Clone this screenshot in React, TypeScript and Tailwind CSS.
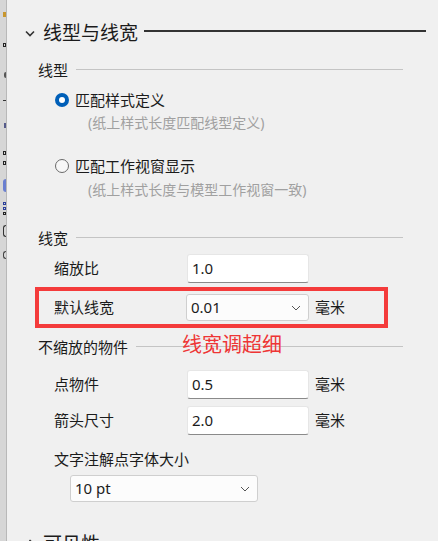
import React from 'react';

const font = "font-['Noto_Sans','Noto_Sans_CJK_SC',sans-serif]";

const Chevron: React.FC<{ className?: string }> = ({ className }) => (
  <svg width="10" height="6" viewBox="0 0 10 6" className={className}>
    <polyline points="1,1 5,5 9,1" fill="none" stroke="currentColor" strokeWidth="1" />
  </svg>
);

const SectionHeader: React.FC<{ title: string; open?: boolean; className?: string }> = ({ title, open = true, className }) => (
  <div className={`flex h-[22px] items-center pr-[12px] ${className ?? ''}`}>
    <div className="flex w-[36px] justify-end pr-[8px] text-[#333]">
      {open ? (
        <svg width="10" height="7" viewBox="0 0 10 7">
          <polyline points="1,1.5 5,5.5 9,1.5" fill="none" stroke="currentColor" strokeWidth="1.6" />
        </svg>
      ) : (
        <svg width="7" height="10" viewBox="0 0 7 10">
          <polyline points="1.5,1 5.5,5 1.5,9" fill="none" stroke="currentColor" strokeWidth="1.6" />
        </svg>
      )}
    </div>
    <span className="text-[19px] leading-none text-[#1b1b1b]">{title}</span>
    <div className="mb-[4px] ml-[6px] h-[2px] flex-1 bg-[#333]" />
  </div>
);

const SubHeader: React.FC<{ title: string; className?: string }> = ({ title, className }) => (
  <div className={`flex h-[18px] items-center pl-[31px] pr-[35px] ${className ?? ''}`}>
    <span className="text-[15px] leading-none text-[#1b1b1b]">{title}</span>
    <div className="mb-[2px] ml-[8px] h-px flex-1 bg-[#c4c4c4]" />
  </div>
);

const Radio: React.FC<{ label: string; checked?: boolean; className?: string }> = ({ label, checked, className }) => (
  <div className={`flex h-[20px] items-center pl-[48px] ${className ?? ''}`}>
    {checked ? (
      <span className="flex h-[14px] w-[14px] items-center justify-center rounded-full bg-[#005fb8]">
        <span className="h-[6px] w-[6px] rounded-full bg-white" />
      </span>
    ) : (
      <span className="h-[14px] w-[14px] rounded-full border border-[#6a6a6a] bg-[#f7f7f7]" />
    )}
    <span className="ml-[6px] text-[15px] leading-none text-[#1b1b1b]">{label}</span>
  </div>
);

const Desc: React.FC<{ text: string; className?: string }> = ({ text, className }) => (
  <div className={`flex h-[18px] items-center pl-[81px] text-[14px] leading-none text-[#a0a0a0] ${className ?? ''}`}>
    {text}
  </div>
);

const TextBox: React.FC<{ value: string }> = ({ value }) => (
  <div className="flex h-[29px] w-[122px] items-center rounded-[3px] border border-[#e6e6e6] border-b-[#8a8a8a] bg-white pl-[4px] text-[15px] text-[#1b1b1b]">
    {value}
  </div>
);

const SelectBox: React.FC<{ value: string; width: string }> = ({ value, width }) => (
  <div className={`flex h-[27px] ${width} items-center justify-between rounded-[3px] border border-[#cfcfcf] bg-[#fcfcfc] pl-[4px] pr-[7px] text-[15px] text-[#1b1b1b]`}>
    <span>{value}</span>
    <Chevron className="text-[#555]" />
  </div>
);

const FieldRow: React.FC<{ label: string; value: string; unit?: string; className?: string }> = ({ label, value, unit, className }) => (
  <div className={`flex h-[29px] items-center pl-[47px] ${className ?? ''}`}>
    <span className="w-[133px] text-[15px] leading-none text-[#1b1b1b]">{label}</span>
    <TextBox value={value} />
    {unit && <span className="ml-[6px] text-[15px] leading-none text-[#1b1b1b]">{unit}</span>}
  </div>
);

const LeftStrip: React.FC = () => (
  <div className="flex w-[7px] shrink-0 flex-col items-end border-r border-[#b8b8b8] bg-[#d6d6d6] pt-[12px]">
    <span className="h-[5px] w-[3px] shrink-0 bg-[#c8962d]" />
    <span className="mt-[26px] h-[4px] w-[3px] shrink-0 border border-[#222]" />
    <span className="mt-[25px] h-[6px] w-[2px] shrink-0 rounded-l bg-[#555]" />
    <span className="mt-[22px] h-[1px] w-[3px] shrink-0 bg-[#333]" />
    <span className="mt-[22px] h-[5px] w-[2px] shrink-0 bg-[#555a8a]" />
    <span className="mt-[23px] h-[4px] w-[3px] shrink-0 border border-[#222]" />
    <span className="mt-[6px] h-[4px] w-[3px] shrink-0 border border-[#222]" />
    <span className="mt-[14px] h-[13px] w-[3px] shrink-0 rounded-l bg-[#6a7fd0]" />
    <span className="mt-[10px] h-[3px] w-[3px] shrink-0 border border-[#2a3f9a]" />
    <span className="mt-[2px] h-[3px] w-[3px] shrink-0 border border-[#2a3f9a]" />
    <span className="mt-[2px] h-[3px] w-[3px] shrink-0 border border-[#222]" />
    <span className="mt-[10px] h-[12px] w-[3px] shrink-0 rounded-l border border-r-0 border-[#333]" />
    <span className="mt-[14px] h-[8px] w-[3px] shrink-0 rounded-l border border-r-0 border-[#444]" />
  </div>
);

export default function App() {
  return (
    <div className={`flex h-[541px] w-[438px] overflow-hidden bg-[#f0f0f0] ${font}`}>
      <LeftStrip />
      <div className="min-w-0 flex-1">
        <SectionHeader title="线型与线宽" className="mt-[22px]" />
        <SubHeader title="线型" className="mt-[17px]" />
        <Radio label="匹配样式定义" checked className="mt-[11px]" />
        <Desc text="(纸上样式长度匹配线型定义)" className="mt-[4px]" />
        <Radio label="匹配工作视窗显示" className="mt-[24px]" />
        <Desc text="(纸上样式长度与模型工作视窗一致)" className="mt-[5px]" />
        <SubHeader title="线宽" className="mt-[30px]" />
        <FieldRow label="缩放比" value="1.0" className="mt-[7px]" />

        <div className="ml-[28px] mt-[4px] flex h-[41px] w-[353px] items-center border-[4px] border-[#f43b3b] pl-[15px]">
          <span className="w-[132px] text-[15px] leading-none text-[#1b1b1b]">默认线宽</span>
          <SelectBox value="0.01" width="w-[123px]" />
          <span className="ml-[6px] text-[15px] leading-none text-[#1b1b1b]">毫米</span>
        </div>

        <div className="relative mt-[10px]">
          <SubHeader title="不缩放的物件" />
          <span className="absolute left-[175px] top-[-3px] text-[20px] leading-none text-[#ee3535]">线宽调超细</span>
        </div>

        <FieldRow label="点物件" value="0.5" unit="毫米" className="mt-[14px]" />
        <FieldRow label="箭头尺寸" value="2.0" unit="毫米" className="mt-[7px]" />

        <div className="mt-[15px] flex h-[18px] items-center pl-[47px] text-[15px] leading-none text-[#1b1b1b]">
          文字注解点字体大小
        </div>
        <div className="mt-[7px] pl-[63px]">
          <SelectBox value="10 pt" width="w-[188px]" />
        </div>

        <SectionHeader title="可见性" open={false} className="mt-[31px]" />
      </div>
    </div>
  );
}
